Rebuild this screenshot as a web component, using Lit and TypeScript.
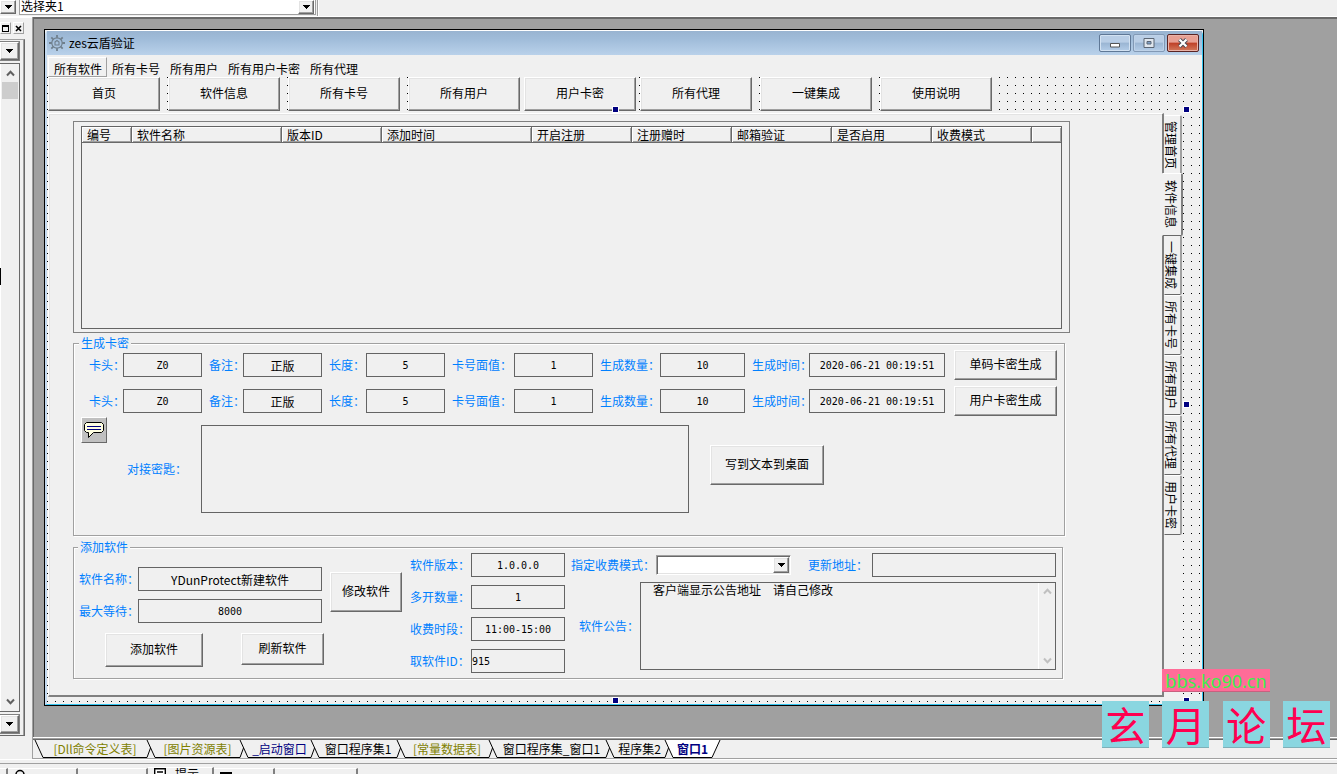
import { LitElement, html, css, svg, nothing } from "lit";
import { customElement, property, state } from "lit/decorators.js";

const arrow = html`<svg class="tri" viewBox="0 0 7 4" width="7" height="4" shape-rendering="crispEdges" aria-hidden="true"><path d="M0 0h7v1h-1v1h-1v1h-1v1h-1v-1h-1v-1h-1v-1h-1z" fill="#000"/></svg>`;

const chevron = (up: boolean, color: string) => html`<svg viewBox="0 0 9 7" width="9" height="7" aria-hidden="true"><path d="${up ? "M1 5.5 4.5 1.8 8 5.5" : "M1 1.5 4.5 5.2 8 1.5"}" fill="none" stroke="${color}" stroke-width="2"/></svg>`;

interface Column { title: string; width?: number }

const columns: Column[] = [
  { title: "编号", width: 50 },
  { title: "软件名称", width: 150 },
  { title: "版本ID", width: 100 },
  { title: "添加时间", width: 150 },
  { title: "开启注册", width: 100 },
  { title: "注册赠时", width: 100 },
  { title: "邮箱验证", width: 100 },
  { title: "是否启用", width: 100 },
  { title: "收费模式", width: 100 },
  { title: "" },
];

const fileTabs = [
  { text: "[Dll命令定义表]", kind: "table" },
  { text: "[图片资源表]", kind: "table" },
  { text: "_启动窗口", kind: "form" },
  { text: "窗口程序集1", kind: "code" },
  { text: "[常量数据表]", kind: "table" },
  { text: "窗口程序集_窗口1", kind: "code" },
  { text: "程序集2", kind: "code" },
  { text: "窗口1", kind: "form" },
];

const shared = css`
  * { box-sizing: border-box; }
  button, input, select, textarea {
    font: inherit;
    color: inherit;
    margin: 0;
    padding: 0;
    border-radius: 0;
    outline: none;
  }
  button { white-space: nowrap; }
  svg { display: block; flex: none; }
  .bevel {
    background: #f0f0f0;
    border: 1px solid;
    border-color: #fff #696969 #696969 #fff;
    box-shadow: inset -1px -1px #a0a0a0, inset 1px 1px #e3e3e3;
  }
  .drop {
    display: flex;
    align-items: center;
    justify-content: center;
    width: 16px;
  }
`;

@customElement("admin-form")
class AdminForm extends LitElement {
  @state() private page = 1;

  static styles = [shared, css`
    :host { display: flex; flex-direction: column; flex: 1; min-height: 0; }
    .menu { display: flex; height: 22px; padding: 2px 0 0 1px; }
    .menu button { border: 1px solid transparent; padding: 2px 4px 0 5px; width: auto; margin-right: -1px; background: none; line-height: 17px; }
    .menu button + button { margin-left: 0; }
    .menu .on { border-color: #fff #a0a0a0 #a0a0a0 #fff; }
    .canvas {
      flex: 1;
      min-height: 0;
      display: flex;
      flex-direction: column;
      gap: 2px;
      padding: 0 20px 7px 1px;
      background: conic-gradient(from 270deg at 1px 1px, #000 90deg, transparent 0) 0 0 / 8px 8px;
    }
    .nav, .trio { display: flex; }
    .nav { gap: 8px; }
    .trio { gap: 4px; }
    .nav button { width: 112px; height: 34px; }
    .bevel { padding-bottom: 2px; }
    .book { position: relative; flex: 1; min-height: 0; display: flex; background: #f0f0f0; }
    .page {
      flex: 1;
      min-width: 0;
      display: flex;
      flex-direction: column;
      padding: 7px 92px 16px 24px;
      border: 1px solid #fff;
      border-right: 2px solid #808080;
      border-bottom: 2px solid #808080;
      box-shadow: inset 1px 1px #e3e3e3;
    }
    .side { display: flex; flex-direction: column; width: 18px; padding-top: 2px; }
    .side button {
      height: 60px;
      border: 1px solid;
      border-color: #fff #a0a0a0 #696969 transparent;
      border-right-width: 2px;
      border-radius: 0 2px 2px 0;
      padding-right: 2px;
      background: #f0f0f0;
      writing-mode: vertical-rl;
      text-orientation: sideways;
      line-height: 14px;
    }
    .side .on {
      position: relative;
      height: 63px;
      margin: -2px -1px -1px -2px;
      border-color: #fff #808080 #696969 #f0f0f0;
    }
    .grip {
      position: absolute;
      width: 7px;
      height: 7px;
      background: #000080;
      border: 1px solid #fff;
    }
    .t { top: -7px; }
    .b { bottom: -7px; }
    .m { top: calc(50% - 4px); }
    .c { left: calc(50% - 3px); }
    .r { right: -8px; }

    .listbox { flex: 1; min-height: 0; border: 1px solid #808080; padding: 4px 7px 3px; display: flex; }
    .list { flex: 1; border: 1px solid #646464; overflow: hidden; }
    table { width: 100%; table-layout: fixed; border-collapse: separate; border-spacing: 0; }
    th {
      height: 16px;
      padding: 0 0 0 5px;
      text-align: left;
      font-weight: normal;
      line-height: 14px;
      white-space: nowrap;
      overflow: hidden;
      border-right: 1px solid #696969;
      border-bottom: 1px solid #696969;
      box-shadow: inset 1px 1px #fff, inset -1px -1px #a0a0a0;
    }
    th:last-child { border-right: none; }

    fieldset {
      min-width: 0;
      margin: 0;
      border: 1px solid #a0a0a0;
      box-shadow: 1px 1px #fff, inset 1px 1px #fff;
    }
    legend { line-height: 10px; padding: 0 2px; background: #f0f0f0; }
    legend, label { color: #0080ff; white-space: nowrap; }
    label { padding-left: 7px; }
    input, textarea { display: block; width: 100%; min-width: 0; background: #f0f0f0; border: 1px solid #646464; resize: none; }
    input { height: 24px; text-align: center; }
    .num { font-family: "DejaVu Sans Mono", monospace; font-size: 10px; }
    .left { text-align: left; }

    .make { margin: 5px 5px 0 0; padding: 2px 7px 22px 8px; }
    .make legend { margin-left: -3px; }
    .keys {
      display: grid;
      grid-template-columns: 41px 79fr 41px 79fr 44px 79fr 69px 79fr 67px 85fr 64px 136fr 112px;
      grid-auto-rows: 30px;
      row-gap: 6px;
      align-items: center;
    }
    .keys button { margin-left: 9px; height: 30px; }
    .secret { display: flex; align-items: center; margin-top: 9px; height: 88px; }
    .note {
      align-self: flex-start;
      margin: -8px 13px 0 -1px;
      padding: 3px 2px;
      width: 26px;
      height: 26px;
      border: 1px solid;
      border-color: #fff #696969 #696969 #fff;
      background: #c0c0c0;
    }
    .secret label { width: 81px; }
    .secret textarea { flex: 1; height: 88px; }
    .secret button { align-self: flex-start; width: 114px; height: 40px; margin: 20px 233px 0 21px; }

    .add { margin: 6px 7px 0 0; padding: 1px 6px 5px 5px; }
    .add legend { margin-left: -1px; }
    .cols { display: grid; grid-template-columns: 243px 72px 155px 1fr; column-gap: 8px; }
    .cols label { padding-left: 0; }
    .basic { padding-top: 14px; }
    .pairs { display: grid; row-gap: 8px; align-items: center; }
    .basic .pairs { grid-template-columns: 59px 1fr; }
    .ver { grid-template-columns: 61px 1fr; align-content: start; }
    .acts { display: flex; gap: 38px; margin: 10px 0 0 26px; }
    .acts button { flex: none; width: 98px; height: 34px; }
    .acts button + button { width: 83px; height: 32px; }
    .edit { margin-top: 19px; height: 40px; }
    .extra { display: flex; flex-direction: column; gap: 5px; margin-left: -2px; }
    .line { display: flex; align-items: center; }
    .line .mode { width: 85px; }
    .line .url { width: 81px; padding-left: 17px; }
    .line .notice { width: 69px; padding-left: 8px; }
    .combo {
      display: grid;
      grid-template-columns: 1fr 17px;
      width: 135px;
      height: 20px;
      background: #fff;
      border: 1px solid;
      border-color: #a0a0a0 #fff #fff #a0a0a0;
      box-shadow: inset 1px 1px #696969, inset -1px -1px #e3e3e3;
    }
    .combo select { grid-area: 1 / 1 / 2 / 3; appearance: none; border: 0; background: none; padding-left: 4px; }
    .combo .drop { grid-area: 1 / 2; margin: 1px 1px 1px 0; padding: 0; pointer-events: none; }
    .line .addr { flex: 1; width: auto; }
    .memo { flex: 1; display: flex; height: 88px; border: 1px solid #646464; }
    .memo textarea { flex: 1; border: 0; line-height: 14px; overflow: hidden; }
    .bar {
      width: 17px;
      display: flex;
      flex-direction: column;
      align-items: center;
      justify-content: space-between;
      padding: 5px 0;
      border-left: 1px solid #fff;
    }
  `];

  private field(id: string, label: string, value: string, cls = "num") {
    return html`<label for=${id}>${label}</label><input id=${id} class=${cls} .value=${value}>`;
  }

  private keyRow(n: number, action: string) {
    return html`
      ${this.field(`head${n}`, "卡头：", "Z0")}
      ${this.field(`memo${n}`, "备注：", "正版", "")}
      ${this.field(`len${n}`, "长度：", "5")}
      ${this.field(`worth${n}`, "卡号面值：", "1")}
      ${this.field(`count${n}`, "生成数量：", "10")}
      ${this.field(`time${n}`, "生成时间：", "2020-06-21 00:19:51")}
      <button class="bevel">${action}</button>`;
  }

  render() {
    const b = (t: string) => html`<button class="bevel">${t}</button>`;
    return html`
      <nav class="menu">
        ${["所有软件", "所有卡号", "所有用户", "所有用户卡密", "所有代理"].map(
          (t, i) => html`<button class=${i === 0 ? "on" : ""}>${t}</button>`)}
      </nav>
      <div class="canvas">
        <div class="nav">
          ${["首页", "软件信息", "所有卡号"].map(b)}
          <div class="trio">${["所有用户", "用户卡密", "所有代理"].map(b)}</div>
          ${["一键集成", "使用说明"].map(b)}
        </div>
        <div class="book">
          <div class="page">
            <div class="listbox"><div class="list">
              <table>
                <colgroup>${columns.map((c) => html`<col style=${c.width ? `width:${c.width}px` : nothing}>`)}</colgroup>
                <thead><tr>${columns.map((c) => html`<th>${c.title}</th>`)}</tr></thead>
              </table>
            </div></div>

            <fieldset class="make">
              <legend>生成卡密</legend>
              <div class="keys">${this.keyRow(1, "单码卡密生成")}${this.keyRow(2, "用户卡密生成")}</div>
              <div class="secret">
                <span class="note">
                  <svg viewBox="0 0 20 18" width="20" height="18" aria-hidden="true">
                    <path d="M2.5 1.5h15l2 2v6l-2 2h-8l-5 5v-5h-2l-2-2v-6z" fill="#ffffe1" stroke="#000"/>
                    <path d="M3 5.5h14M3 8.5h14" stroke="#000080"/>
                  </svg>
                </span>
                <label for="secret">对接密匙：</label>
                <textarea id="secret"></textarea>
                <button class="bevel">写到文本到桌面</button>
              </div>
            </fieldset>

            <fieldset class="add">
              <legend>添加软件</legend>
              <div class="cols">
                <div class="basic">
                  <div class="pairs">
                    ${this.field("name", "软件名称：", "YDunProtect新建软件", "")}
                    ${this.field("wait", "最大等待：", "8000")}
                  </div>
                  <div class="acts">${b("添加软件")}${b("刷新软件")}</div>
                </div>
                <button class="bevel edit">修改软件</button>
                <div class="pairs ver">
                  ${this.field("version", "软件版本：", "1.0.0.0")}
                  ${this.field("multi", "多开数量：", "1")}
                  ${this.field("hours", "收费时段：", "11:00-15:00")}
                  ${this.field("appid", "取软件ID：", "915", "num left")}
                </div>
                <div class="extra">
                  <div class="line">
                    <label class="mode" for="mode">指定收费模式：</label>
                    <span class="combo"><select id="mode"><option></option></select><span class="drop bevel">${arrow}</span></span>
                    <label class="url" for="url">更新地址：</label>
                    <input id="url" class="addr">
                  </div>
                  <div class="line">
                    <label class="notice" for="notice">软件公告：</label>
                    <div class="memo">
                      <textarea id="notice" .value=${"　客户端显示公告地址　请自己修改"}></textarea>
                      <span class="bar">${chevron(true, "#c0c0c0")}${chevron(false, "#c0c0c0")}</span>
                    </div>
                  </div>
                </div>
              </div>
            </fieldset>
          </div>
          <div class="side">
            ${["管理首页", "软件信息", "一键集成", "所有卡号", "所有用户", "所有代理", "用户卡密"].map(
              (t, i) => html`<button class=${i === this.page ? "on" : ""} @click=${() => (this.page = i)}>${t}</button>`)}
          </div>
          <i class="grip t c"></i><i class="grip t r"></i><i class="grip m r"></i>
          <i class="grip b c"></i><i class="grip b r"></i>
        </div>
      </div>`;
  }
}

@customElement("tool-dock")
class ToolDock extends LitElement {
  static styles = [shared, css`
    :host { display: flex; flex-direction: column; width: 32px; padding: 4px 7px 23px 0; border-top: 1px solid #fff; }
    .caption { display: flex; gap: 2px; height: 17px; }
    .caption button { display: flex; align-items: center; justify-content: center; width: 11px; height: 12px; border: 1px solid; border-color: #fff #a0a0a0 #a0a0a0 #fff; background: #f0f0f0; }
    .frame { flex: 1; min-height: 0; display: flex; flex-direction: column; border: 1px solid #696969; border-left: 0; border-color: #a0a0a0 #696969 #696969; padding: 1px 4px 1px 0; box-shadow: inset -1px 0 #a0a0a0; }
    .combo { display: flex; height: 20px; border: 1px solid #808080; border-left: 0; }
    .combo .drop { flex: 1; }
    .tree { flex: 1; min-height: 0; display: flex; margin: 2px 0; border: 1px solid #696969; border-left: 0; }
    .rows { width: 1px; background: linear-gradient(#fff 204px, #000 0, #000 221px, #fff 0); }
    .scroll { flex: 1; display: flex; flex-direction: column; align-items: center; padding: 6px 1px; }
    .thumb { width: 100%; height: 17px; margin-top: 5px; background: #cdcdcd; }
    .scroll svg:last-child { margin-top: auto; }
  `];

  render() {
    return html`
      <div class="caption">
        <button aria-label="还原"><svg viewBox="0 0 7 7" width="7" height="7" shape-rendering="crispEdges"><path d="M.5 1h6v5.500h-6z" fill="none" stroke="#000"/><path d="M0 1h7" stroke="#000" stroke-width="2"/></svg></button>
        <button aria-label="关闭"><svg viewBox="0 0 7 7" width="7" height="7"><path d="M1 1l5 5M6 1l-5 5" stroke="#000" stroke-width="1.600"/></svg></button>
      </div>
      <div class="frame">
        <span class="combo"><button class="drop bevel" aria-label="展开">${arrow}</button></span>
        <div class="tree"><span class="rows"></span>
          <div class="scroll">${chevron(true, "#606060")}<span class="thumb"></span>${chevron(false, "#606060")}</div>
        </div>
        <span class="combo"><button class="drop bevel" aria-label="展开">${arrow}</button></span>
      </div>`;
  }
}

@customElement("file-tabs")
class FileTabs extends LitElement {
  @property({ type: Number }) active = 7;

  static styles = [shared, css`
    :host {
      display: grid;
      grid-template-columns: 8px 104px 8px 85px 8px 63px 8px 78px 8px 84px 8px 109px 8px 51px 8px 39px 8px;
      height: 22px;
      padding: 0 0 1px 2px;
      border-top: 1px solid #fff;
      box-shadow: inset 0 1px #a0a0a0, inset 0 2px #696969;
      border-bottom: 1px solid #a0a0a0;
    }
    svg { margin-top: 2px; overflow: visible; }
    button { margin-top: 2px; height: 18px; border: 0; border-bottom: 1px solid #000; background: none; line-height: 16px; }
    .table { color: #808000; }
    .form { color: #000080; }
    .on { background: #fff; font-weight: bold; }
  `];

  render() {
    const last = fileTabs.length - 1;
    return html`
      ${fileTabs.map((t, i) => html`
        <svg viewBox="0 0 8 18" width="8" height="18" aria-hidden="true">
          ${i === this.active ? svg`<path d="M0 0h8v18z" fill="#fff"/>` : nothing}
          <path d="M0 0 8 17.500" stroke="#000" fill="none"/>
          ${i > 0 ? svg`<path d="M0 17.500 3.500 8" stroke="#000" fill="none"/>` : nothing}
        </svg>
        <button class="${t.kind} ${i === this.active ? "on" : ""}" @click=${() => (this.active = i)}>${t.text}</button>`)}
      <svg viewBox="0 0 8 18" width="8" height="18" aria-hidden="true">
        ${this.active === last ? svg`<path d="M0 0h8L0 18z" fill="#fff"/>` : nothing}
        <path d="M8 0 0 17.500" stroke="#000" fill="none"/>
      </svg>`;
  }
}

@customElement("app-root")
class AppRoot extends LitElement {
  static styles = [shared, css`
    :host {
      position: relative;
      display: flex;
      flex-direction: column;
      height: 100vh;
      overflow: hidden;
      background: #f0f0f0;
      color: #000;
      font: 12px/16px "Noto Sans CJK SC", sans-serif;
    }
    .top { display: flex; height: 17px; border-bottom: 1px solid #fff; }
    .top .first { height: 14px; width: 16px; margin-right: 3px; }
    .pick { display: grid; grid-template-columns: 1fr 17px; width: 297px; height: 15px; background: #fff; border: 1px solid #a0a0a0; border-top: 0; }
    .pick select { grid-area: 1 / 1 / 2 / 3; appearance: none; border: 0; background: none; padding: 0 0 2px 1px; line-height: 12px; }
    .pick .drop { grid-area: 1 / 2; pointer-events: none; }
    .edge { width: 2px; margin-left: 1px; border-left: 1px solid #a0a0a0; background: #fff; }
    .work { flex: 1; min-height: 0; display: flex; }
    .main { flex: 1; min-width: 0; display: flex; flex-direction: column; border-left: 1px solid #a0a0a0; }
    .mdi {
      flex: 1;
      min-height: 0;
      display: flex;
      padding: 10px 133px 31px 10px;
      background: #a0a0a0;
      border: solid #696969;
      border-width: 2px 0 0 1px;
    }
    .window {
      flex: 1;
      min-width: 0;
      display: flex;
      flex-direction: column;
      border: 1px solid #000;
      background: #f0f0f0;
    }
    .frame {
      flex: 1;
      min-height: 0;
      display: flex;
      flex-direction: column;
      border: 1px solid #fff;
      border-left: 2px solid #c4daf0;
      border-right-color: #35c5f0;
      border-bottom-color: #35c5f0;
      border-radius: 5px 5px 0 0;
    }
    .title {
      display: flex;
      align-items: center;
      gap: 2px;
      height: 24px;
      padding: 0 3px 0 2px;
      background: linear-gradient(#99b4d1, #a2bedb 40%, #b9d1ea);
    }
    .title h1 { flex: 1; margin: 0 0 0 2px; font: inherit; }
    .title button {
      display: flex;
      align-items: center;
      justify-content: center;
      width: 32px;
      height: 18px;
      border: 1px solid #5f7896;
      border-radius: 2px;
      background: linear-gradient(#b9cee6 45%, #9ab5d3 50%, #b4cde8);
      box-shadow: inset 0 0 0 1px #d3e2f2;
    }
    .title .off { border-color: #8299b5; box-shadow: inset 0 0 0 1px #bed2e8; }
    .title .close { border-color: #5a2424; background: linear-gradient(#e8a093 45%, #bf4027 50%, #d27a5c); box-shadow: inset 0 0 0 1px #eab3a8; }
    .status { display: flex; align-items: flex-end; height: 15px; overflow: hidden; border-top: 1px solid #fff; background: linear-gradient(#f0f0f0 3px, #a0a0a0 3px, #a0a0a0 4px, #f0f0f0 4px); }
    .status button { display: flex; align-items: flex-start; gap: 9px; height: 6px; overflow: hidden; border: 0; border-right: 2px solid #808080; border-top: 1px solid #fff; background: none; padding: 0 6px; }
    .status .s0 { width: 8px; padding: 0; }
    .status .s1, .status .s2 { width: 70px; }
    .status .s3 { width: 66px; height: 7px; line-height: 12px; }
    .status .s4 { width: 61px; }
    .status .s5 { width: 83px; }
    .mark { position: absolute; right: 7px; bottom: 26px; width: 228px; display: grid; grid-template-columns: repeat(4, 47px); justify-content: space-between; row-gap: 9px; pointer-events: none; }
    .site {
      grid-area: 1 / 2 / 2 / 4;
      height: 23px;
      padding-left: 3px;
      background: #ff6c98;
      border-bottom: 1px solid #c9607f;
      color: #3cf04c;
      font: 400 18px/24px "Noto Sans", sans-serif;
      white-space: nowrap;
    }
    .tile {
      grid-row: 2;
      height: 47px;
      background: #8ad6e0;
      border-bottom: 1px solid #7fb0b8;
      color: #ff0050;
      font-size: 40px;
      line-height: 46px;
      text-align: center;
    }
  `];

  render() {
    return html`
      <header class="top">
        <button class="drop bevel first" aria-label="展开">${arrow}</button>
        <span class="pick"><select aria-label="组件"><option>选择夹1</option></select><span class="drop bevel">${arrow}</span></span>
        <span class="edge"></span>
      </header>
      <div class="work">
        <tool-dock></tool-dock>
        <div class="main">
          <div class="mdi">
            <section class="window"><div class="frame">
              <div class="title">
                <svg viewBox="0 0 16 16" width="16" height="16" aria-hidden="true" fill="none" stroke="#6f7f8c">
                  <circle cx="8" cy="8" r="5.200" stroke-width="1.200"/>
                  <path d="M8 0v2.800M8 13.200V16M0 8h2.800M13.200 8H16M2.300 2.300l2 2M11.700 11.700l2 2M2.300 13.700l2-2M11.700 4.300l2-2" stroke-width="1.800"/>
                  <path d="M6 7l2-1.500L10 7v3H6z" stroke-width="1.100"/>
                </svg>
                <h1>zes云盾验证</h1>
                <button aria-label="最小化"><svg viewBox="0 0 12 10" width="12" height="10"><path d="M1.500 5.500h9v3.500h-9z" fill="#fff" stroke="#555"/></svg></button>
                <button class="off" aria-label="最大化"><svg viewBox="0 0 12 10" width="12" height="10"><path d="M1 .5h10v9h-10z" fill="#dfe6ee" stroke="#5b6674"/><path d="M4 3.500h4v2.500h-4z" fill="#7fa0c8" stroke="#5b6674"/></svg></button>
                <button class="close" aria-label="关闭"><svg viewBox="0 0 12 10" width="12" height="10"><path d="M2.500 1.500l7 7M9.500 1.500l-7 7" stroke="#4a4a55" stroke-width="4"/><path d="M2.500 1.500l7 7M9.500 1.500l-7 7" stroke="#fff" stroke-width="2.200"/></svg></button>
              </div>
              <admin-form></admin-form>
            </div></section>
          </div>
          <file-tabs></file-tabs>
        </div>
      </div>
      <footer class="status">
        <button class="s0" aria-label="面板"></button>
        <button class="s1" aria-label="查找"><svg viewBox="0 0 12 12" width="12" height="12"><circle cx="6" cy="5.500" r="4" fill="none" stroke="#000" stroke-width="1.500"/></svg></button>
        <button class="s2" aria-label="监视"></button>
        <button class="s3"><svg viewBox="0 0 12 12" width="12" height="12"><path d="M.7.7h10.600v10.600H.7zM3 4h6" fill="#fff" stroke="#000" stroke-width="1.400"/></svg>提示</button>
        <button class="s4" aria-label="输出"><svg viewBox="0 0 12 12" width="12" height="12"><path d="M0 4h12" stroke="#000" stroke-width="2"/></svg></button>
        <button class="s5" aria-label="变量"></button>
      </footer>
      <aside class="mark">
        <span class="site">bbs.ko90.cn</span>
        ${["玄", "月", "论", "坛"].map((c) => html`<span class="tile">${c}</span>`)}
      </aside>`;
  }
}
